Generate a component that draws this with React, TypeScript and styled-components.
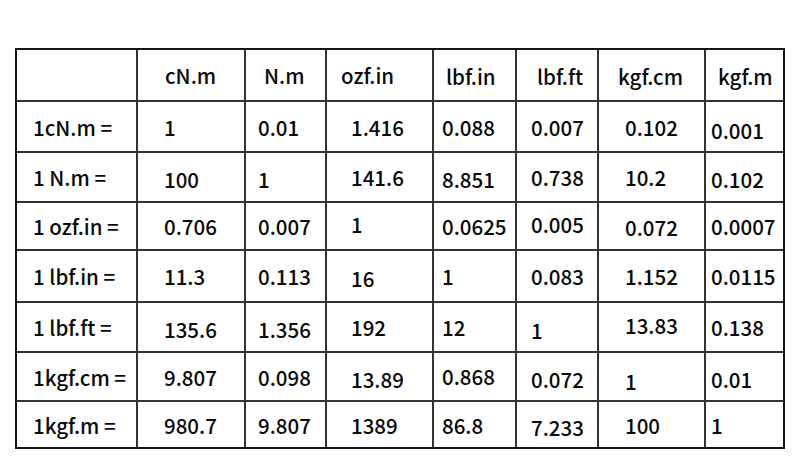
import React from "react";
import styled, { createGlobalStyle } from "styled-components";

const GlobalStyle = createGlobalStyle`
  html, body {
    margin: 0;
    padding: 0;
    background: #ffffff;
  }
  body {
    font-family: "Noto Sans CJK SC", "Noto Sans", sans-serif;
    color: #0a0a0a;
  }
`;

const Page = styled.div`
  width: 800px;
  height: 464px;
  padding: 48px 0 0 15px;
  box-sizing: border-box;
  background: #fff;
`;

const Grid = styled.div`
  display: grid;
  grid-template-columns: 119px 106px 79px 105px 81px 80px 105px 77px;
  grid-template-rows: 50px 49px 48px 46px 50px 48px 47px 45px;
  gap: 2px;
  width: fit-content;
  background: #333;
  border: 2px solid #151515;
`;

const Cell = styled.div<{ $pad: number }>`
  display: flex;
  align-items: center;
  background: #fff;
  padding-left: ${(p) => p.$pad}px;
  font-size: 20.5px;
  font-weight: 500;
  line-height: 24px;
  white-space: nowrap;
`;

const Text = styled.span<{ $dy: number }>`
  position: relative;
  top: ${(p) => p.$dy}px;
`;

type Val = string | [string, number];

const headers: Val[] = ["cN.m", "N.m", "ozf.in", ["lbf.in", 1], ["lbf.ft", 1], ["kgf.cm", 1], ["kgf.m", 1]];
const headerPad = [27, 18, 14, 12, 20, 19, 12];
const dataPad = [26, 12, 24, 8, 14, 26, 5];

const rows: { label: string; values: Val[] }[] = [
  { label: "1cN.m =", values: ["1", "0.01", "1.416", "0.088", "0.007", "0.102", ["0.001", 3]] },
  { label: "1 N.m =", values: [["100", 2], ["1", 2], "141.6", ["8.851", 2], "0.738", "10.2", ["0.102", 2]] },
  { label: "1 ozf.in =", values: ["0.706", "0.007", ["1", -2], "0.0625", ["0.005", -2], ["0.072", 1], "0.0007"] },
  { label: "1 lbf.in =", values: ["11.3", "0.113", ["16", 2], "1", "0.083", "1.152", "0.0115"] },
  { label: "1 lbf.ft =", values: [["135.6", 2], ["1.356", 2], "192", "12", ["1", 3], ["13.83", -2], "0.138"] },
  { label: "1kgf.cm =", values: ["9.807", "0.098", ["13.89", 2], ["0.868", -1], ["0.072", 2], ["1", 4], ["0.01", 2]] },
  { label: "1kgf.m =", values: ["980.7", "9.807", "1389", "86.8", ["7.233", 2], "100", "1"] },
];

function show(v: Val, pad: number, key: string) {
  const [txt, dy] = typeof v === "string" ? [v, 0] : v;
  return (
    <Cell key={key} $pad={pad}>
      <Text $dy={dy}>{txt}</Text>
    </Cell>
  );
}

export default function App() {
  return (
    <Page>
      <GlobalStyle />
      <Grid>
        <Cell $pad={16} />
        {headers.map((h, i) => show(h, headerPad[i], "h" + i))}
        {rows.map((r, ri) => (
          <React.Fragment key={r.label}>
            {show(r.label, 16, "l" + ri)}
            {r.values.map((v, i) => show(v, dataPad[i], ri + "-" + i))}
          </React.Fragment>
        ))}
      </Grid>
    </Page>
  );
}
